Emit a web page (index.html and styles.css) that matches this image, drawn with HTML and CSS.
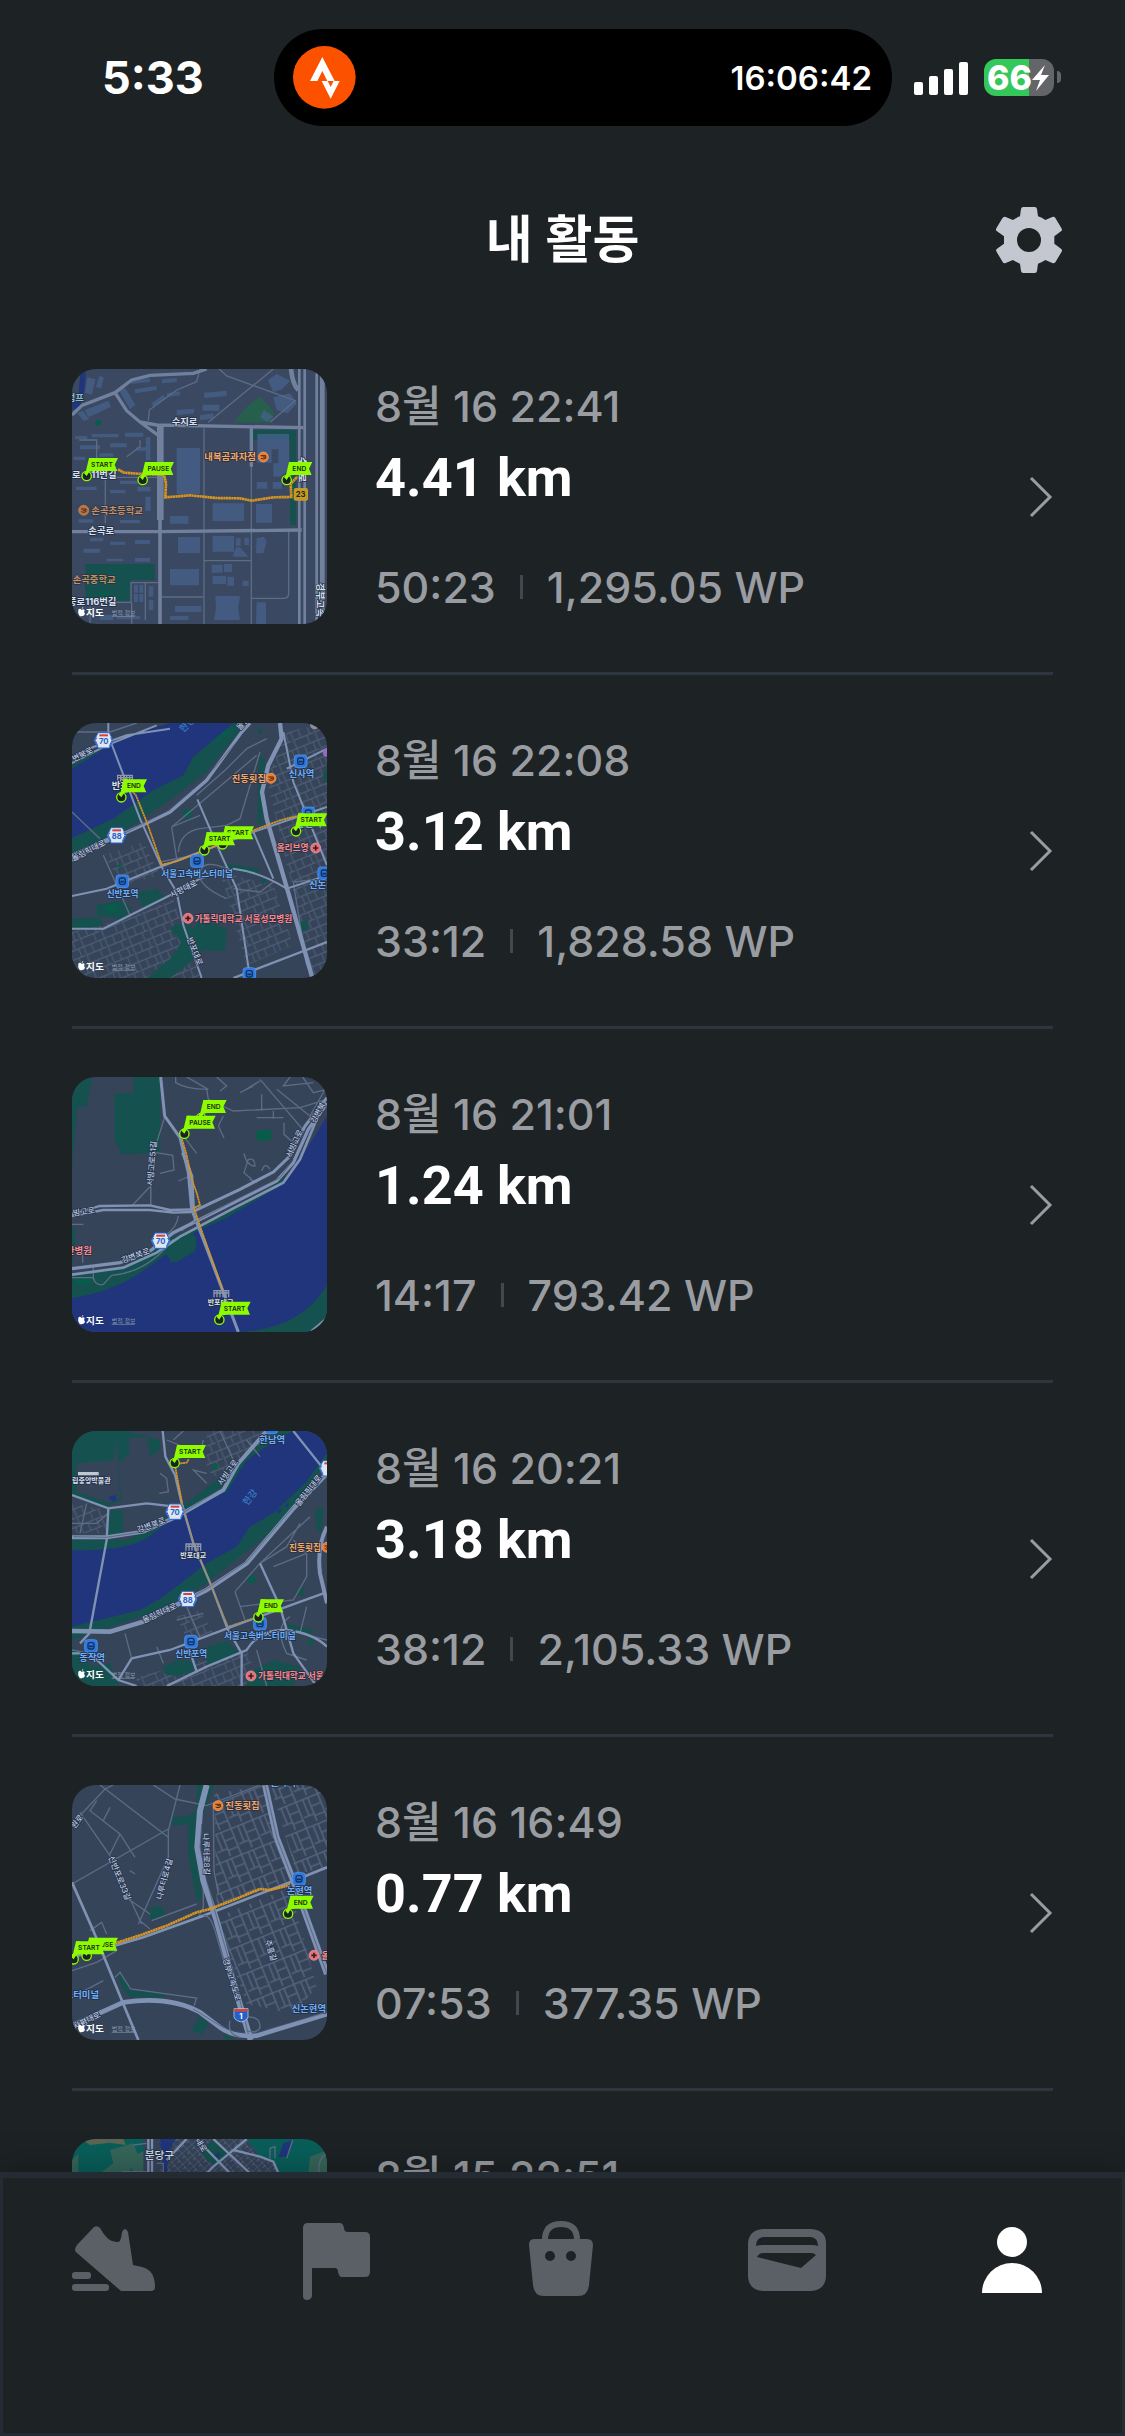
FILE: index.html
```html
<!DOCTYPE html>
<html lang="ko">
	<head>
		<meta charset="utf-8">
		<meta name="viewport" content="width=device-width, initial-scale=1">
		<title>내 활동</title>
		<link rel="stylesheet" href="styles.css">
	</head>
	<body>
		<!-- shared map symbols -->
		<svg class="defs" aria-hidden="true">
			<defs>
				<g id="pin">
					<circle r="14" fill="#1d2225" stroke="#8dfc00" stroke-width="4"/>
					<path d="M0 0L-8 -8L-2 -16L7 -54H20V-15L8 -13Z" fill="#8dfc00"/>
				</g>
				<g id="pin-start">
					<use href="#pin"/>
					<path d="M7 -54H94L84 -34L92 -15H7Z" fill="#8dfc00"/>
					<text class="pin-text" x="46" y="-27">START</text>
				</g>
				<g id="pin-pause">
					<use href="#pin"/>
					<path d="M7 -54H94L84 -34L92 -15H7Z" fill="#8dfc00"/>
					<text class="pin-text" x="47" y="-27">PAUSE</text>
				</g>
				<g id="pin-end">
					<use href="#pin"/>
					<path d="M7 -54H77L67 -34L75 -15H7Z" fill="#8dfc00"/>
					<text class="pin-text" x="38" y="-27">END</text>
				</g>
				<g id="shield">
					<path d="M-17 -23H17L28 0L17 23H-17L-28 0Z" fill="#dfe6ef" stroke="#2763c9" stroke-width="3"/>
					<path d="M-21 -8L-25 0L-17 18M21 -8L25 0L17 18" fill="none" stroke="#2763c9" stroke-width="3"/>
					<rect x="-13" y="-18" width="26" height="6" fill="#d3433d"/>
				</g>
				<g id="station">
					<rect x="-19" y="-19" width="38" height="38" rx="9" fill="#2f77dc" stroke="#5ba1f5" stroke-width="2"/>
					<rect x="-9" y="-10" width="18" height="19" rx="6" fill="none" stroke="#10305f" stroke-width="4"/>
					<path d="M-6 1H6" stroke="#10305f" stroke-width="5"/>
				</g>
				<g id="poi-food">
					<circle r="15" fill="#e87f35" stroke="#f4a45e" stroke-width="2"/>
					<path d="M-8 -4H7V4Q0 8 -7 4M-2 0H5" fill="none" stroke="#4a2410" stroke-width="3"/>
				</g>
				<g id="poi-care">
					<circle r="15" fill="#e3747c" stroke="#f6959a" stroke-width="2"/>
					<path d="M-8 0H8M0 -8V8" stroke="#3d1b22" stroke-width="5"/>
				</g>
				<g id="bridge">
					<path d="M-24 -10H24M-24 -3H24M-22 -10V10M-13 -10V10M-4 -10V10M5 -10V10M14 -10V10M22 -10V10" fill="none" stroke="#8f98a6" stroke-width="4"/>
				</g>
				<g id="credit">
					<path d="M65 756Q60 749 55 755Q52 765 59 774Q64 776 67 774Q73 774 75 767Q70 762 74 756Q70 752 65 756ZM65 753Q65 748 70 747Q70 752 65 753Z" fill="#fff"/>
					<text class="credit" x="78" y="773">지도</text>
					<text class="legal" x="155" y="772">법적 정보</text>
					<path d="M155 775H224" stroke="#8a97ab" stroke-width="2"/>
				</g>
				<pattern id="streets-a" width="68" height="52" patternUnits="userSpaceOnUse" patternTransform="rotate(-22)">
					<path d="M0 4H68M6 0V52M30 4V30M6 30H68M48 30V52M58 4V30" fill="none" stroke="#4f5e75" stroke-width="3"/>
				</pattern>
				<pattern id="streets-b" width="84" height="70" patternUnits="userSpaceOnUse" patternTransform="rotate(68)">
					<path d="M0 6H84M8 0V70M36 6V38M8 38H84M60 38V70M66 6V38M8 54H60" fill="none" stroke="#56657d" stroke-width="4"/>
				</pattern>
				<pattern id="streets-c" width="26" height="20" patternUnits="userSpaceOnUse" patternTransform="rotate(48)">
					<path d="M0 0H26M0 0V20M13 0V10" fill="none" stroke="#66758f" stroke-width="2"/>
				</pattern>
			</defs>
		</svg>

		<div class="app">
			<div class="status">
				<span class="time">5:33</span>
				<div class="island">
					<svg class="island-logo" viewBox="0 0 189 189" aria-hidden="true">
						<circle cx="94" cy="94" r="94" fill="#fc5200"/>
						<path d="M51 105L88 33L125 105H103L88 75L73 105Z" fill="#fff"/>
						<path d="M86 105H104L113 123L122 105H140L113 158Z" fill="#fff"/>
					</svg>
					<span class="island-time">16:06:42</span>
				</div>
				<div class="indicators">
					<svg class="signal" viewBox="0 0 54 34" aria-hidden="true">
						<rect x="0" y="21" width="9" height="13" rx="2"/>
						<rect x="15" y="15" width="9" height="19" rx="2"/>
						<rect x="30" y="8" width="9" height="26" rx="2"/>
						<rect x="45" y="1" width="9" height="33" rx="2"/>
					</svg>
					<div class="battery">
						<span class="battery-level">66</span>
						<svg class="bolt" viewBox="0 0 17 26" aria-hidden="true"><path d="M13 0L0 15H8L4 26L17 10H9Z" fill="#fff"/></svg>
					</div>
				</div>
			</div>

			<header class="header">
				<h1 class="title">내 활동</h1>
				<button class="settings" type="button" aria-label="설정">
					<svg viewBox="0 0 198 198" aria-hidden="true">
						<path fill-rule="evenodd" d="M82 0H116Q122 0 123 6L126 28Q138 32 148 39L169 30Q175 28 178 33L196 63Q200 69 195 73L175 88V110L195 125Q200 129 197 134L179 164Q175 170 169 168L148 159Q138 166 126 170L123 192Q122 198 116 198H82Q76 198 75 192L72 170Q61 166 51 159L29 168Q23 170 20 165L2 135Q-2 129 3 125L24 110V88L3 73Q-2 69 1 64L19 34Q23 28 29 30L51 39Q61 32 72 28L75 6Q76 0 82 0ZM99 63A36 36 0 1 0 99 135A36 36 0 1 0 99 63Z"/>
					</svg>
				</button>
			</header>

			<main class="list-wrap">
				<ul class="list">
					<li class="item">
						<a class="row" href="#">
							<svg class="thumb thumb-near" viewBox="36 27 765 765" aria-hidden="true">
								<path class="river" d="M62 27H78L73 90L60 140L36 150V130L55 110Z"/>
								<path fill="#275f4d" d="M600 110L645 160L632 187H522L560 140Z"/>
								<path class="park" d="M580 210H708V495H690V240H580ZM76 612H285V660H212V722H76Z"/>
								<rect x="107" y="180" width="16" height="15" fill="#075c4a"/>
								<rect x="118" y="694" width="24" height="14" fill="#075c4a"/>
								<path class="block" d="M350 264H420V402H350ZM592 222H687V330L660 350H640V310H655V268H635V308H592ZM458 430H552V483H458ZM588 432H636V488H588ZM330 468H385V491H330ZM354 531H420V579H354ZM458 528H522V575H458ZM330 627H417V676H330ZM466 708H540L534 744L540 780H462L468 744ZM345 738H424V756H345ZM590 727H618V792H588ZM455 614H488V638H455ZM492 612H516V636H492ZM458 648H498V672H458ZM502 650H522V677H502ZM548 662H566V678H548ZM528 535H542V558H528ZM553 533H567V555H553ZM590 535L612 530L620 545L610 580H588ZM528 562H540L565 590L518 590ZM590 366H622V386H590ZM638 366H666V386H638ZM330 768H385V780H330Z"/>
								<path class="block" d="M75 150L145 122L153 140L85 172ZM52 160L68 152L88 178L70 182ZM82 52L106 58L96 104L75 98ZM118 48L132 52L122 86L108 80ZM176 90L196 84L226 135L210 148ZM224 88L290 78V90L226 100ZM214 62L270 55V65L214 72ZM306 58L350 54V66L306 70ZM274 130L310 105L318 116L280 142ZM432 98L500 92V108L434 114ZM350 150L402 146V160L350 166ZM428 134H478V152H428ZM320 100L360 94V106L320 112ZM420 166L460 160V176L420 180ZM624 60L650 42L690 62L666 88L640 96ZM640 112L690 100L710 130L684 160L650 150ZM612 150L640 170L622 186L600 172Z"/>
								<path class="block" d="M95 222H176V232H95ZM195 218H250V230H195ZM46 228H82V238H46ZM60 256H120V268H60ZM150 250H200V262H150ZM228 262H268V272H228ZM258 232H271V300H258ZM118 280H160V290H118ZM40 290H76V300H40ZM180 362H235V372H180ZM48 380H110V390H48ZM150 390H196V400H150ZM232 380H272V394H232ZM256 410H272V452H256ZM180 480H240V490H180ZM56 478H100V488H56ZM225 540H270V552H225ZM150 545H196V554H150ZM70 566H120V578H70ZM90 534H130V544H90ZM140 596H190V604H140ZM225 594H270V605H225ZM222 674H234V698H222ZM238 674H250V698H238ZM222 702H234V726H222ZM238 702H250V726H238ZM266 678H280V710H266ZM266 720H280V750H266ZM120 765H160V780H120ZM170 768H240V778H170Z"/>
								<path class="minor" d="M136 350V490M36 352H300M300 668H213V727H160M256 668V780M215 727V792M432 205V792M574 205V792M432 602H574M305 711H432M686 515V700Q686 715 672 715H574M265 182L268 150L350 90L410 65L420 27M445 187L640 27M478 27L500 48L706 122L630 187M90 792V740M58 240H110V300M200 290L240 260V240"/>
								<path class="road" stroke-width="10" d="M36 165L66 136L165 98L215 60L270 46L400 40L440 27M165 98L200 152L240 186L290 195L730 203M240 186L300 230M574 200V320M36 515L300 515L725 510"/>
								<path class="road" stroke-width="20" d="M301 195V480"/>
								<path class="road" stroke-width="11" d="M300 470V792"/>
								<path class="road" stroke-width="8" d="M718 27V792M734 27V792M770 40V792"/>
								<path class="road" stroke-width="14" d="M787 40V770M693 27Q698 75 715 90"/>
								<path class="track" d="M174 328L192 338L246 342L312 344L318 370L316 412L390 406L470 414L540 415L575 422L640 412L694 411L692 372L712 350"/>
								<text class="label white" x="335" y="196">수지로</text>
								<text class="label food" x="433" y="300">내복곰과자점</text>
								<use href="#poi-food" x="610" y="291"/>
								<text class="label white" x="36" y="353">로</text>
								<text class="label white" x="94" y="353">11번길</text>
								<text class="label white" x="85" y="521">손곡로</text>
								<g opacity="0.75">
									<text class="label food" x="94" y="461">손곡초등학교</text>
									<use href="#poi-food" x="71" y="451"/>
									<text class="label food" x="38" y="669">손곡중학교</text>
								</g>
								<text class="label teal" x="20" y="122">점프</text>
								<text class="label white" x="24" y="734">풍로116번길</text>
								<text class="label white" transform="translate(770 668) rotate(90)">경부고속</text>
								<text class="label white" transform="translate(716 290) rotate(90)">수지로</text>
								<rect x="701" y="384" width="43" height="38" rx="6" fill="#c69a22"/>
								<text class="badge dark" x="722" y="411">23</text>
								<use href="#pin-start" x="80" y="348"/>
								<use href="#pin-pause" x="248" y="360"/>
								<use href="#pin-end" x="680" y="360"/>
								<use href="#credit" y="-6"/>
							</svg>
							<div class="info">
								<time class="date">8월 16 22:41</time>
								<strong class="distance">4.41 km</strong>
								<p class="stats"><span>50:23</span><span class="points">1,295.05 WP</span></p>
							</div>
							<svg class="chevron" viewBox="0 0 24 42" aria-hidden="true"><path d="M2 2L21 21L2 40"/></svg>
						</a>
					</li>

					<li class="item">
						<a class="row" href="#">
							<svg class="thumb" viewBox="36 33 765 765" aria-hidden="true">
								<path fill="url(#streets-a)" d="M620 200L680 60L801 33V798H760ZM36 660L200 620L340 560L420 798H36ZM480 480L640 520L700 700L560 760ZM130 430L250 390L300 490L190 520Z"/>
								<path class="park" d="M36 440L210 345L350 250L440 180L560 33H490L250 240L36 360ZM36 155L150 100L130 140L36 170Z"/>
								<path class="river" d="M150 100L240 60L330 33H520L400 135L370 190L280 235L160 320L36 378V170Z"/>
								<path class="park" d="M330 740L365 690L330 650Q360 620 400 650L420 620L500 650L495 715H430L380 760L330 798H260ZM110 580L190 565L215 590L190 625L110 610ZM36 620L120 615L130 640L60 655H36ZM596 130L616 140L608 230V345L592 330ZM590 52L610 50L600 70ZM230 540L290 530L320 560L250 590ZM500 455L600 470L590 490L500 470ZM720 630L745 625L742 655L722 657ZM790 180L801 175V210H790ZM600 508L612 495L622 505L608 520Z"/>
								<path fill="#075c4a" d="M372 290L398 296L390 322L368 308ZM130 585L165 572L180 590L150 605ZM485 65L500 52L508 62L492 75ZM468 85L482 72L488 82L475 95ZM165 462L185 455L182 468Z"/>
								<path class="minor" d="M335 345L460 240L590 130M335 345L350 440M410 250L500 170L560 110M560 110L620 80M355 420Q360 360 420 350L500 340L540 320L600 120M300 450L400 430M335 345L420 310M210 610L130 430M36 300L120 380M36 60L150 60L230 33M500 470Q430 440 420 480T500 560M700 510L790 500M700 510L740 760M640 510L600 540L520 530"/>
								<path class="road" stroke-width="6" d="M145 33V70L240 320L305 465L350 540L370 640L425 798M412 262L480 420L530 530L570 798M36 552L140 530L300 465L580 360L801 285M580 360L640 500M670 60L700 210L801 460M680 170L801 110M36 650H130L200 615L350 540L420 500L520 470Q600 480 680 530L801 490"/>
								<path class="road" stroke-width="6" d="M36 135L100 105L200 70L330 50M36 153L140 100L290 40"/>
								<path class="road" stroke-width="7" d="M520 798L801 690"/>
								<path class="road" stroke-width="10" d="M36 445L130 392L250 338L330 300L440 205L545 60L570 33M36 430L170 370"/>
								<path class="casing" d="M180 370L320 298L430 205L530 90"/>
								<path class="road" stroke-width="13" d="M660 33L665 80L625 160L606 240L620 320L690 560L757 798"/>
								<path class="track thin" d="M184 200L228 250L262 335L305 458L350 448L435 415L580 355L660 325L740 305"/>
								<text class="label road-name" transform="translate(42 150) rotate(-27)">변북로</text>
								<text class="label road-name" transform="translate(40 448) rotate(-27)">올림픽대로</text>
								<text class="label road-name" transform="translate(335 558) rotate(-27)">사평대로</text>
								<text class="label road-name" transform="translate(380 680) rotate(68)">반포대로</text>
								<text class="label road-name" transform="translate(540 56) rotate(-50)">올림</text>
								<text class="label water" transform="translate(370 62) rotate(-45)">한강</text>
								<use href="#bridge" x="195" y="200"/>
								<text class="label white" x="155" y="230">반포</text>
								<text class="label food" x="515" y="210">진동횟집</text>
								<use href="#poi-food" x="633" y="199"/>
								<use href="#station" x="722" y="148"/>
								<text class="label rail" x="686" y="194">신사역</text>
								<use href="#station" x="745" y="304"/>
								<text class="label rail" x="708" y="346">논현역</text>
								<use href="#station" x="411" y="447"/>
								<text class="label rail small" x="304" y="494">서울고속버스터미널</text>
								<use href="#station" x="187" y="508"/>
								<text class="label rail small" x="140" y="554">신반포역</text>
								<use href="#station" x="793" y="484"/>
								<text class="label rail" x="747" y="529">신논현</text>
								<use href="#station" x="568" y="786"/>
								<circle cx="801" cy="122" r="12" fill="#9b67c9"/>
								<circle cx="764" cy="38" r="14" fill="#8b8f96"/>
								<text class="label care small" x="650" y="418">올리브영</text>
								<use href="#poi-care" x="767" y="408"/>
								<text class="label care small" x="404" y="629">가톨릭대학교 서울성모병원</text>
								<use href="#poi-care" x="384" y="619"/>
								<use href="#shield" x="131" y="85"/>
								<text class="badge" x="131" y="96">70</text>
								<use href="#shield" x="170" y="370"/>
								<text class="badge" x="170" y="381">88</text>
								<use href="#pin-start" x="488" y="397"/>
								<use href="#pin-start" x="433" y="415"/>
								<use href="#pin-start" x="708" y="358"/>
								<use href="#pin-end" x="184" y="256"/>
								<use href="#credit"/>
							</svg>
							<div class="info">
								<time class="date">8월 16 22:08</time>
								<strong class="distance">3.12 km</strong>
								<p class="stats"><span>33:12</span><span class="points">1,828.58 WP</span></p>
							</div>
							<svg class="chevron" viewBox="0 0 24 42" aria-hidden="true"><path d="M2 2L21 21L2 40"/></svg>
						</a>
					</li>

					<li class="item">
						<a class="row" href="#">
							<svg class="thumb" viewBox="36 33 765 765" aria-hidden="true">
								<path class="park" d="M36 33H98L80 120L52 125L40 260L36 330ZM130 33H301V260L185 265L162 220V85L220 80V33ZM36 485H46V560L36 590Z"/>
								<path class="park" d="M36 630L200 600L320 520L420 480L600 390L690 320L801 170V798H36Z"/>
								<path class="river" d="M36 697Q160 675 240 620L320 565L335 590L410 545L400 500L500 455L660 360L740 250L801 150V660Q730 780 560 798H36Z"/>
								<path class="park" d="M320 545L410 510L405 555L345 590ZM540 798Q720 790 801 658V798Z"/>
								<path fill="#075c4a" d="M588 195L633 190L635 222L590 225ZM45 640H90V655H45Z"/>
								<path class="minor" d="M347 33V50Q380 70 440 70L445 100L520 135L720 125L801 100M380 33L445 70M470 33L500 60L480 75M600 40L728 190L700 230L672 205V170M550 75L600 45M540 80L580 60M650 70L750 150L801 60M690 33L670 60L760 50M728 33L760 80L801 70M605 135V85M590 155H670M640 135V158M215 420L272 360V420M288 260L338 268L342 312L300 322M475 180L492 216M490 150L475 180M362 200L410 262M552 262Q560 300 585 300Q585 275 565 280L552 320L575 340M605 315Q615 285 630 310M355 345L390 330M36 475H70M355 450Q350 485 320 505M365 495L410 455M36 635H100Q105 660 130 655L155 628Q260 620 340 520M68 540V590M100 600V640M570 340L590 350"/>
								<path class="minor" stroke-width="3" d="M315 150L290 230L272 300V420"/>
								<path class="road" stroke-width="9" d="M302 33L314 150L360 215L385 320L395 430L430 520L535 798"/>
								<path class="road" stroke-width="10" d="M368 260L395 330L400 430"/>
								<path class="road" stroke-width="7" d="M36 444L120 420L270 418L330 432L400 430M36 450L130 432H270L340 440L395 438"/>
								<path class="road" stroke-width="9" d="M400 436L540 370L640 318L690 270L735 180L801 95"/>
								<path class="road" stroke-width="10" d="M36 608L180 590L270 555L340 500L520 410L650 345L700 290L745 190L801 112"/>
								<path class="road" stroke-width="8" d="M36 626L190 605L290 560L360 512L530 422L670 350L720 280L770 160"/>
								<path class="casing" d="M400 470L540 395L660 335L700 280"/>
								<path class="road" stroke-width="5" d="M750 798L801 755"/>
								<path class="track thin" d="M366 220L378 260L385 290L397 345L410 380L420 418L402 425L420 480L445 550L488 670"/>
								<text class="label road-name" transform="translate(278 360) rotate(-85)">서빙고로51길</text>
								<text class="label road-name" transform="translate(40 450) rotate(-8)">빙고로</text>
								<text class="label road-name" transform="translate(188 592) rotate(-20)">강변북로</text>
								<text class="label road-name" transform="translate(692 276) rotate(-65)">서빙고로</text>
								<text class="label road-name" transform="translate(766 174) rotate(-62)">강변북</text>
								<text class="label care" x="18" y="563">산병원</text>
								<use href="#shield" x="302" y="524"/>
								<text class="badge" x="302" y="535">70</text>
								<use href="#bridge" x="484" y="684"/>
								<text class="label white tiny" x="443" y="717">반포대교</text>
								<use href="#pin-end" x="423" y="156"/>
								<use href="#pin-pause" x="373" y="203"/>
								<use href="#pin-start" x="478" y="761"/>
								<use href="#credit"/>
							</svg>
							<div class="info">
								<time class="date">8월 16 21:01</time>
								<strong class="distance">1.24 km</strong>
								<p class="stats"><span>14:17</span><span class="points">793.42 WP</span></p>
							</div>
							<svg class="chevron" viewBox="0 0 24 42" aria-hidden="true"><path d="M2 2L21 21L2 40"/></svg>
						</a>
					</li>

					<li class="item">
						<a class="row" href="#">
							<svg class="thumb" viewBox="36 33 765 765" aria-hidden="true">
								<path fill="url(#streets-a)" d="M440 33H640L560 120L500 190L440 150ZM36 250L140 270L150 340H36ZM350 590L420 570L460 640L380 660ZM230 770L560 690L600 798H230Z"/>
								<path class="park" d="M36 33H200L300 60V90L270 110L260 50L205 55L210 100L175 130L185 240L140 260L36 225ZM150 270H190V340L140 345Z"/>
								<path fill="#36445a" d="M50 130L160 120L170 60L180 230L150 250L50 215Z"/>
								<path class="park" d="M36 355L200 360L340 280L560 110L640 33H801V130L640 330L440 490L300 570L36 660Z"/>
								<path class="river" d="M36 390Q190 395 260 355L370 270L500 215L560 120L650 60L700 33H801V100L735 190L640 280L570 320L530 380L440 430L310 530L240 570L36 620Z"/>
								<path class="park" d="M310 740L350 720L410 725L400 755L350 770L310 760ZM420 690L500 660L540 700L450 740ZM36 680L100 740L150 730L180 798H36ZM700 520L735 500L730 530ZM765 270L790 260L785 340L770 330ZM560 760L640 720L720 740L700 798H560ZM680 610L760 630L750 645L690 630Z"/>
								<path fill="#075c4a" d="M560 478L580 462L588 485L572 492ZM455 135L475 130L474 148H455ZM745 660L760 652L758 672L744 676Z"/>
								<path class="river" d="M652 270L664 264L662 276L652 280ZM672 258L686 248L684 262ZM145 230L170 225L165 245L150 240Z"/>
								<path class="minor" d="M300 160L320 175L325 215L298 220M340 60L370 33M320 60L420 100L430 60M440 160L400 150L440 190M525 515L600 430L750 290M525 515L555 600M600 430L680 380L720 310M540 560L700 540L740 470L740 400L700 360M640 440L740 400M195 640L215 715M290 680L310 730M350 600L430 580M380 560L420 650L400 665M690 590Q640 620 680 700L740 720M720 640L801 660M480 33L520 120M600 110L560 60M36 310H110L145 280M80 250L60 340M590 690L620 798M740 560L720 640M36 690L90 700"/>
								<path class="road" stroke-width="7" d="M308 33L316 110L345 165L365 250L400 370L455 500L502 625L545 700V798M145 265L140 360L88 640L60 670M600 430L660 560L700 700L770 798M36 225L145 265L260 250L345 260M215 715L330 690L502 625L790 520M36 700L90 700L175 780L230 798M175 780L215 715M320 798L440 740L560 690Q600 625 680 630Q760 640 801 680M410 755L380 665M700 33L801 160"/>
								<path class="road" stroke-width="12" d="M36 352L140 352L250 335L350 290L490 210L535 130L620 33"/>
								<path class="casing" d="M40 350L140 352L250 335L350 290L485 205L535 120"/>
								<path class="road" stroke-width="14" d="M36 633L150 635L250 605L370 545L440 510L560 430L700 265L801 160"/>
								<path class="casing" d="M380 540L450 500L560 425L700 260"/>
								<path class="road" stroke-width="12" d="M801 320Q770 380 780 460L801 550"/>
								<path class="track thin" d="M386 118L380 128L344 132L355 190L366 248"/>
								<path class="track faint" d="M366 248L402 372L455 500L504 620L600 588"/>
								<text class="label road-name" transform="translate(235 338) rotate(-20)">강변북로</text>
								<text class="label road-name" transform="translate(485 198) rotate(-55)">서빙고로</text>
								<text class="label road-name" transform="translate(252 610) rotate(-25)">올림픽대로</text>
								<text class="label road-name" transform="translate(718 260) rotate(-52)">올림픽대로</text>
								<text class="label water" transform="translate(562 258) rotate(-52)">한강</text>
								<use href="#bridge" x="400" y="382"/>
								<text class="label white tiny" x="361" y="414">반포대교</text>
								<path d="M54 156H116V166H54Z" fill="#c1c7cf"/>
								<text class="label white tiny" x="36" y="190">립중앙박물관</text>
								<text class="label rail" x="598" y="69">한남역</text>
								<use href="#station" x="634" y="22"/>
								<use href="#station" x="93" y="678"/>
								<text class="label rail" x="58" y="724">동작역</text>
								<use href="#station" x="393" y="665"/>
								<text class="label rail small" x="346" y="711">신반포역</text>
								<use href="#station" x="600" y="611"/>
								<text class="label rail small" x="492" y="656">서울고속버스터미널</text>
								<text class="label food small" x="687" y="392">진동횟집</text>
								<use href="#poi-food" x="801" y="382"/>
								<use href="#poi-care" x="573" y="768"/>
								<text class="label care small" x="594" y="778">가톨릭대학교 서울</text>
								<use href="#shield" x="345" y="275"/>
								<text class="badge" x="345" y="286">70</text>
								<use href="#shield" x="383" y="537"/>
								<text class="badge" x="383" y="548">88</text>
								<use href="#shield" x="806" y="145"/>
								<use href="#pin-start" x="344" y="129"/>
								<use href="#pin-end" x="595" y="592"/>
								<use href="#credit"/>
							</svg>
							<div class="info">
								<time class="date">8월 16 20:21</time>
								<strong class="distance">3.18 km</strong>
								<p class="stats"><span>38:12</span><span class="points">2,105.33 WP</span></p>
							</div>
							<svg class="chevron" viewBox="0 0 24 42" aria-hidden="true"><path d="M2 2L21 21L2 40"/></svg>
						</a>
					</li>

					<li class="item">
						<a class="row" href="#">
							<svg class="thumb" viewBox="36 33 765 765" aria-hidden="true">
								<path fill="url(#streets-b)" d="M462 60L610 33L690 320L470 400ZM470 430L690 340L770 640L700 720L560 690ZM630 33H801V280L710 300Z"/>
								<path class="park" d="M412 33H462L430 120L415 200L425 380L410 380L385 250L383 150L340 155L335 130L385 125L408 110ZM265 405L300 393L320 425L272 438ZM172 605L185 600L212 650L315 655V670H210L190 650ZM396 770L415 728L447 742L428 782ZM490 778L525 798H495Z"/>
								<path class="minor" d="M120 33L325 190M36 150L135 45L160 33M60 115L150 245L245 450M36 330L325 165M280 33L345 75L440 95L530 60L600 33M360 33L325 170V250L235 450M110 80L90 110L180 180L225 250M150 100L130 140M180 180L150 240M205 375L270 420M240 440L270 465M275 440L410 390M430 300V400L415 430M165 610L180 595L212 645L410 672L402 695M90 470L125 445L140 480M460 100L462 290L475 360M36 590L110 565L170 530M36 670L130 620M210 290L225 300"/>
								<path class="road" stroke-width="8" d="M36 325L100 470L190 690L235 798M36 550L130 525L250 490L430 425L690 325L801 280"/>
								<path class="road" stroke-width="14" d="M36 755L190 685Q330 665 420 715L480 760Q520 790 590 785L801 720"/>
								<path class="casing" d="M400 705L480 755Q520 780 590 775L801 715"/>
								<path class="road" stroke-width="18" d="M440 33L420 110L412 220L430 320L470 440L530 660L572 798"/>
								<path class="casing" d="M425 150L420 220L440 320L470 430L530 640L565 780"/>
								<path class="road" stroke-width="18" d="M615 33L650 190L700 320L801 600"/>
								<path class="casing" d="M615 33L650 190L700 320L801 600"/>
								<path class="minor" stroke-width="4" d="M430 425Q450 420 465 470L500 590M510 740Q500 780 540 790M560 730Q600 725 600 760Q590 780 560 770"/>
								<path class="track" d="M165 508L240 484L320 455L410 415L450 405L520 378L600 345L630 348L690 333"/>
								<text class="label road-name" transform="translate(145 250) rotate(68)">신반포로33길</text>
								<text class="label road-name" transform="translate(305 378) rotate(-75)">나루터로4길</text>
								<text class="label road-name" transform="translate(428 178) rotate(88)">나루터로8길</text>
								<text class="label road-name" transform="translate(488 555) rotate(73)">경부고속도로</text>
								<text class="label road-name" transform="translate(614 500) rotate(72)">주흥길</text>
								<text class="label road-name" transform="translate(46 768) rotate(-28)">사평대로</text>
								<text class="label road-name" transform="translate(44 165) rotate(-52)">원로</text>
								<text class="label rail" x="630" y="36">신사역</text>
								<text class="label food" x="496" y="105">진동횟집</text>
								<use href="#poi-food" x="474" y="95"/>
								<use href="#station" x="717" y="315"/>
								<text class="label rail" x="680" y="361">논현역</text>
								<text class="label rail" x="14" y="673">스터미널</text>
								<text class="label rail" x="695" y="713">신논현역</text>
								<use href="#poi-care" x="762" y="544"/>
								<text class="label care" x="784" y="554">올리브영</text>
								<path d="M522 704H564V720Q568 738 543 744Q518 738 522 720Z" fill="#2361c8" stroke="#d6dfec" stroke-width="2"/>
								<rect x="523" y="705" width="40" height="8" fill="#d3433d"/>
								<text class="badge on-blue" x="543" y="736">1</text>
								<use href="#pin-pause" x="80" y="545"/>
								<use href="#pin-start" x="41" y="556"/>
								<use href="#pin-end" x="684" y="419"/>
								<use href="#credit"/>
							</svg>
							<div class="info">
								<time class="date">8월 16 16:49</time>
								<strong class="distance">0.77 km</strong>
								<p class="stats"><span>07:53</span><span class="points">377.35 WP</span></p>
							</div>
							<svg class="chevron" viewBox="0 0 24 42" aria-hidden="true"><path d="M2 2L21 21L2 40"/></svg>
						</a>
					</li>

					<li class="item">
						<a class="row" href="#">
							<svg class="thumb thumb-hills" viewBox="216 27 765 765" aria-hidden="true">
								<path fill="#36665a" d="M330 60L400 40L420 90L380 130H300L340 100ZM216 90L235 70V130H216ZM390 80L440 60V130H400ZM930 80L981 60V180H920Z"/>
								<path fill="#5f6554" d="M245 27H370L378 45L330 38L270 45Z"/>
								<path fill="#36445a" d="M430 27H740L780 80L820 90L840 160H430Z"/>
								<path fill="url(#streets-c)" d="M480 27H740L780 80L830 110V160H480Z"/>
								<path class="park" d="M600 60L640 30L690 70L650 110L620 90Z"/>
								<path class="river" d="M480 27H525L505 70L500 130H490ZM850 40L878 30L860 80L835 82ZM640 75L662 66L655 85Z"/>
								<path class="road" stroke-width="7" d="M445 27V140M456 27V140M590 27L700 140M740 27L640 110L610 140M500 90L560 27M700 60L780 80L820 95L840 140M640 27L750 130"/>
								<path class="minor" d="M400 45L440 40M365 125H440M980 70Q950 90 958 130M878 30L860 85M470 100H490V130M810 85V55L825 50V85"/>
								<text class="label white place" x="434" y="88">분당구</text>
								<text class="label road-name" transform="translate(585 30) rotate(60)">내로</text>
							</svg>
							<div class="info">
								<time class="date">8월 15 22:51</time>
							</div>
						</a>
					</li>
				</ul>
			</main>

			<nav class="tabs">
				<a class="tab" href="#" aria-label="운동">
					<svg viewBox="0 0 90 90" aria-hidden="true">
						<path d="M24 13Q27 11 30 14Q38 29 48 28Q51 28 52 18Q55 12 58 18L63 51L72 53Q85 56 85 73Q85 77 81 77H51L7 39Q3 36 7 31Z"/>
						<rect x="2" y="58" width="19" height="7" rx="3"/>
						<rect x="2" y="70" width="37" height="7" rx="3"/>
					</svg>
				</a>
				<a class="tab" href="#" aria-label="챌린지">
					<svg viewBox="0 0 90 90" aria-hidden="true">
						<path d="M9 14Q9 9 14 9H46Q49 9 50 14Q50 18 54 18H71Q76 18 76 23V58Q76 63 71 63H48Q45 63 44 58Q44 54 41 54H18V82Q17 86 13 86Q9 86 9 82Z"/>
					</svg>
				</a>
				<a class="tab" href="#" aria-label="상점">
					<svg viewBox="0 0 90 90" aria-hidden="true">
						<path d="M28 26Q28 10 44 10Q60 10 60 26" fill="none" stroke="#5a6066" stroke-width="6"/>
						<path fill-rule="evenodd" d="M17 25H70Q76 25 76 31L72 71Q71 82 61 82H27Q17 82 16 71L12 31Q12 25 17 25ZM33 37A5 5 0 1 0 33 47A5 5 0 1 0 33 37ZM54 37A5 5 0 1 0 54 47A5 5 0 1 0 54 37Z"/>
					</svg>
				</a>
				<a class="tab" href="#" aria-label="지갑">
					<svg viewBox="0 0 90 90" aria-hidden="true">
						<path fill-rule="evenodd" d="M22 15H70Q85 16 85 29V63Q84 76 70 77H22Q8 76 7 63V29Q8 16 22 15ZM22 23Q15 24 15 32Q17 31 22 31H70Q75 31 77 32Q77 24 70 23ZM22 39Q18 39 16 43L60 54L75 41Q73 39 70 39Z"/>
					</svg>
				</a>
				<a class="tab active" href="#" aria-label="내 활동" aria-current="page">
					<svg viewBox="0 0 90 90" aria-hidden="true">
						<circle cx="47" cy="28" r="15"/>
						<path d="M17 79A30 30 0 0 1 77 79Z"/>
					</svg>
				</a>
			</nav>
		</div>
	</body>
</html>
```
FILE: styles.css
```css
* {
	margin: 0;
	padding: 0;
	box-sizing: border-box;
}
body {
	background-color: #1d2225;
	color: #fff;
	font-family: Inter, "Noto Sans CJK KR", sans-serif;
}
ul {
	list-style: none;
}
a {
	color: inherit;
	text-decoration: none;
}
svg {
	display: block;
}
.defs {
	position: absolute;
	width: 0;
	height: 0;
}
.app {
	display: flex;
	flex-direction: column;
	height: 100vh;
	overflow: hidden;
}

/* status bar */
.status {
	display: grid;
	grid-template-columns: 172px 1fr auto;
	align-items: center;
	padding: 29px 65px 0 102px;
}
.time {
	font-size: 45px;
	font-weight: 700;
	line-height: 54px;
}
.island {
	display: flex;
	align-items: center;
	justify-content: space-between;
	height: 97px;
	padding: 0 20px 0 19px;
	border-radius: 49px;
	background-color: #000;
}
.island-logo {
	width: 63px;
	height: 63px;
}
.island-time {
	font-size: 33px;
	font-weight: 600;
}
.indicators {
	display: flex;
	align-items: center;
	gap: 16px;
	padding-left: 22px;
}
.signal {
	width: 54px;
	height: 34px;
	fill: #fff;
}
.battery {
	position: relative;
	display: flex;
	align-items: center;
	width: 70px;
	height: 37px;
	margin-right: 6px;
	padding-left: 3px;
	border-radius: 12px;
	background: linear-gradient(to right, #34c759 65%, #636569 65%);
}
.battery::after {
	content: "";
	position: absolute;
	top: 12px;
	right: -7px;
	width: 4px;
	height: 12px;
	border-radius: 0 4px 4px 0;
	background-color: #636569;
}
.battery-level {
	font-size: 34px;
	font-weight: 800;
	line-height: 37px;
}
.bolt {
	flex: none;
	width: 17px;
	height: 26px;
}

/* title bar */
.header {
	display: grid;
	grid-template-columns: 1fr auto 1fr;
	align-items: center;
	height: 228px;
	padding: 0 63px;
}
.title {
	grid-column: 2;
	font-size: 51px;
	font-weight: 600;
	line-height: 66px;
}
.settings {
	justify-self: end;
	width: 66px;
	height: 66px;
	border: 0;
	background: none;
	cursor: pointer;
}
.settings svg {
	width: 66px;
	height: 66px;
	fill: #c4c7cf;
}

/* activity list */
.list-wrap {
	flex: 1;
	min-height: 0;
	overflow: hidden;
	padding: 15px 72px 0;
}
.item {
	padding-bottom: 48px;
	margin-bottom: 48px;
	border-bottom: 3px solid #2d363f;
}
.row {
	display: flex;
	gap: 48px;
}
.thumb {
	flex: none;
	width: 255px;
	height: 255px;
	border-radius: 24px;
	background-color: #36445a;
}
.thumb-near {
	background-color: #3a4961;
}
.thumb-hills {
	background-color: #095f5b;
}
.info {
	flex: 1;
	display: flex;
	flex-direction: column;
	padding: 7px 0;
}
.date, .stats {
	color: #999da1;
	font-size: 43px;
	font-weight: 500;
	line-height: 60px;
}
.distance {
	margin-top: 9px;
	font-family: Roboto, "Noto Sans CJK KR", sans-serif;
	font-size: 54px;
	font-weight: 700;
	line-height: 66px;
}
.stats {
	display: flex;
	align-items: center;
	margin-top: auto;
}
.points {
	display: flex;
	align-items: center;
}
.points::before {
	content: "";
	width: 3px;
	height: 24px;
	margin: 0 24px;
	background-color: #43484d;
}
.chevron {
	flex: none;
	align-self: center;
	width: 24px;
	height: 42px;
	fill: none;
	stroke: #999da1;
	stroke-width: 3px;
}

/* maps */
.river {
	fill: #20357b;
}
.park {
	fill: #15524f;
}
.block {
	fill: #46608a;
	opacity: 0.8;
}
.road {
	fill: none;
	stroke: #8092b3;
}
.thumb-near .road {
	stroke: #71809c;
}
.minor {
	fill: none;
	stroke: #5d6c85;
	stroke-width: 4px;
}
.casing {
	fill: none;
	stroke: #465672;
	stroke-width: 2px;
}
.track {
	fill: none;
	stroke: #d79522;
	stroke-width: 8px;
	stroke-dasharray: 7 1;
}
.track.thin {
	stroke-width: 5px;
}
.track.faint {
	stroke: #a48d5f;
	stroke-width: 4px;
}
.label {
	font-size: 28px;
	font-weight: 700;
	paint-order: stroke;
	stroke: #222c40;
	stroke-width: 4px;
}
.label.white {
	fill: #d9e1f2;
}
.label.small {
	font-size: 26px;
}
.label.tiny {
	font-size: 21px;
}
.label.place {
	font-size: 32px;
	font-weight: 500;
}
.label.road-name {
	fill: #bccae4;
	font-size: 24px;
	font-weight: 500;
}
.label.food {
	fill: #f5a765;
}
.label.care {
	fill: #f8898c;
}
.label.rail {
	fill: #6caef8;
}
.label.teal {
	fill: #86bccd;
}
.label.water {
	fill: #3b7cc8;
	font-weight: 500;
	stroke: none;
}
.badge {
	fill: #2763c9;
	font-size: 23px;
	font-weight: 700;
	text-anchor: middle;
}
.badge.dark {
	fill: #1d2225;
}
.badge.on-blue {
	fill: #fff;
}
.pin-text {
	fill: #1d2a10;
	font-size: 20px;
	font-weight: 600;
	text-anchor: middle;
}
.credit {
	fill: #fff;
	font-size: 29px;
	font-weight: 700;
}
.legal {
	fill: #8a97ab;
	font-size: 18px;
}

/* bottom tabs */
.tabs {
	z-index: 1;
	display: flex;
	align-items: flex-start;
	height: 264px;
	padding-top: 36px;
	border: 3px solid #242b33;
	border-top-width: 6px;
	background-color: #1d2225;
	box-shadow: 0 0 36px rgba(0, 0, 0, 0.3);
}
.tab {
	flex: 1;
	display: flex;
	justify-content: center;
}
.tab svg {
	width: 90px;
	height: 90px;
	fill: #5a6066;
}
.tab.active svg {
	fill: #fff;
}
```
